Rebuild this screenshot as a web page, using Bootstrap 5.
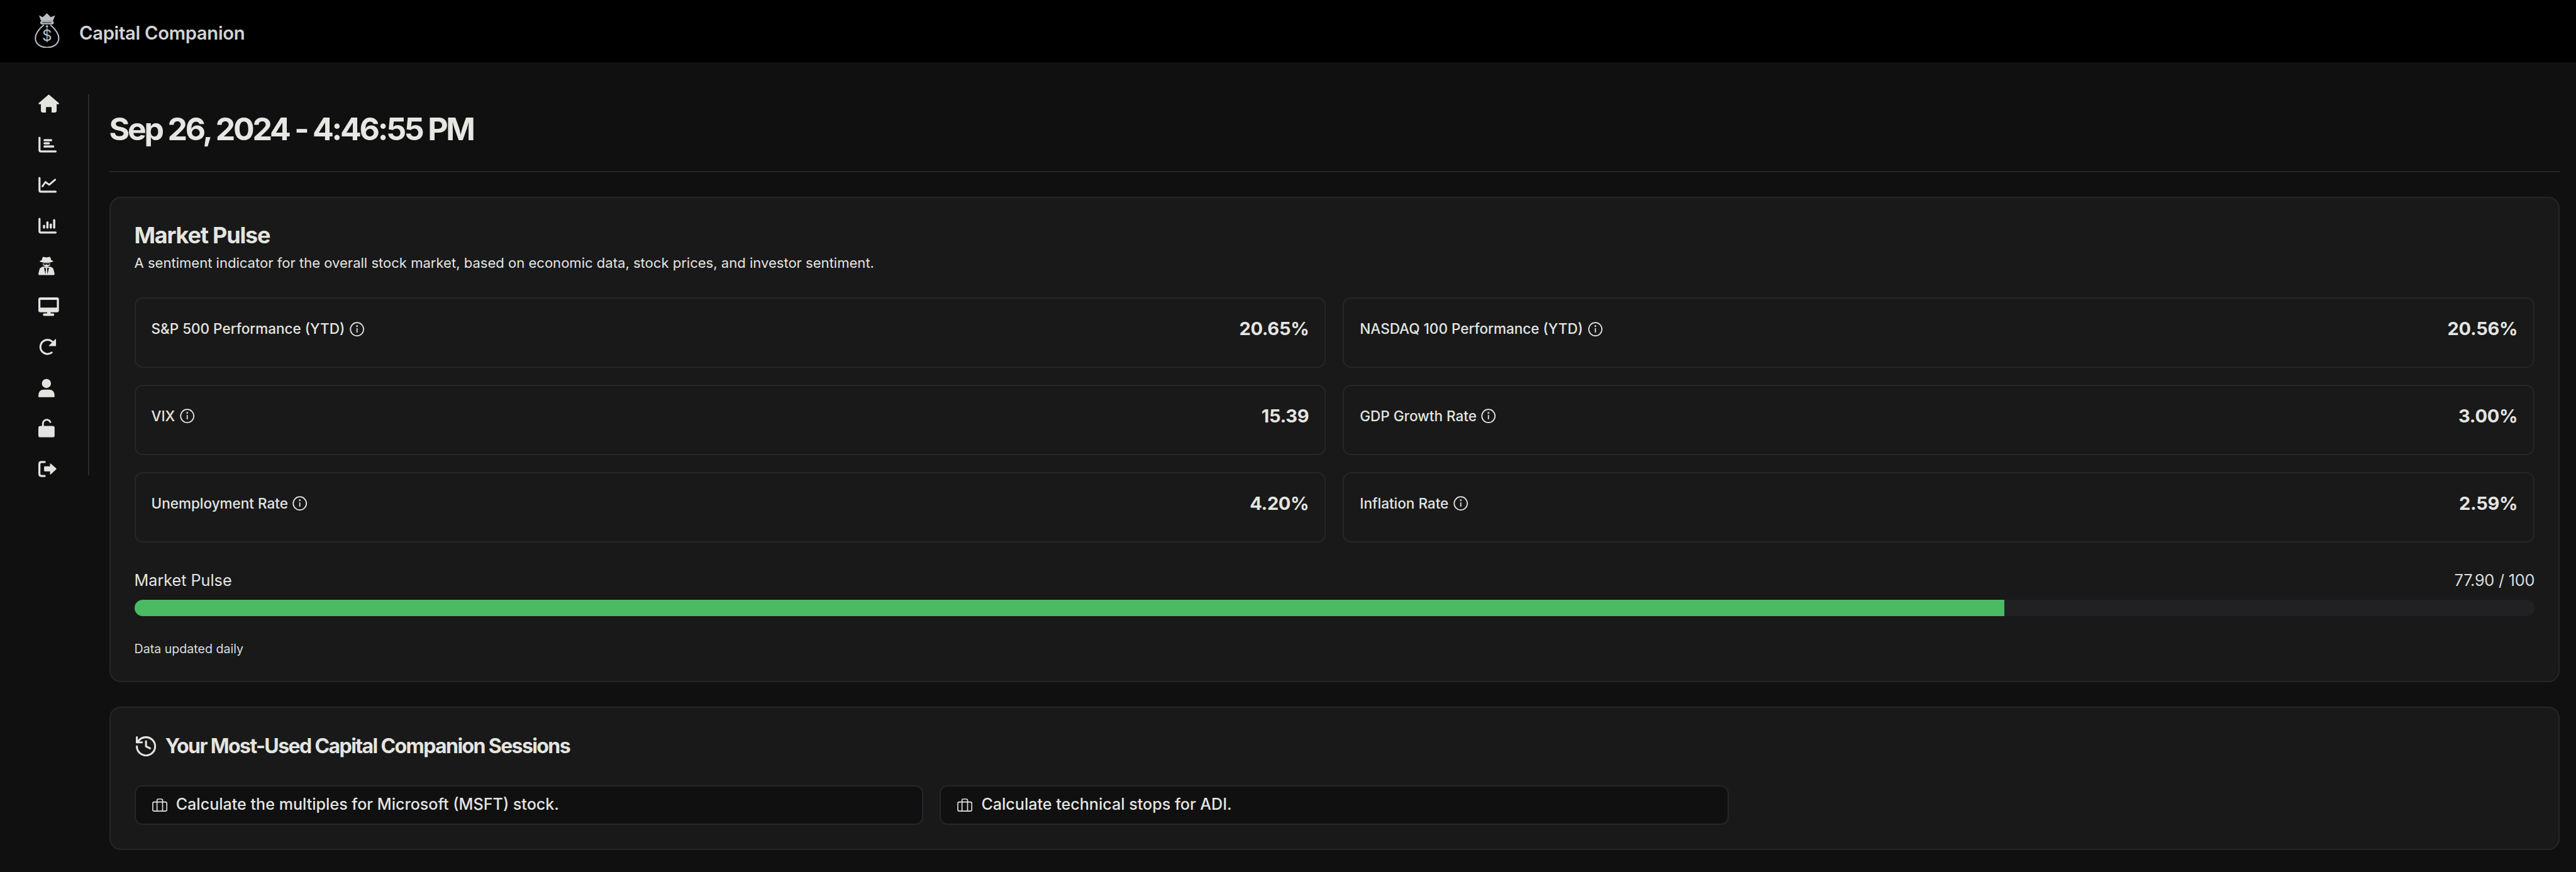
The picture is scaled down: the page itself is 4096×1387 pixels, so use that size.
<!DOCTYPE html>
<html lang="en">
<head>
    <meta charset="UTF-8">
    <meta name="viewport" content="width=device-width, initial-scale=1.0">
    <title>Capital Companion</title>
    <link rel="stylesheet" href="https://cdn.jsdelivr.net/npm/bootstrap@5.3.0/dist/css/bootstrap.min.css">
    <style>
        html, body { height: 100%; }
        body { background: #101011; color: #e4e5e0; font-family: Inter, "Liberation Sans", sans-serif; overflow: hidden; }
        .top-bar { background: #000; height: 98.5px; padding: 0 0 0 55px; justify-content: flex-start; flex-wrap: nowrap; gap: 31px; }
        .logo-mark { width: 40px; height: 55.5px; margin-top: -2px; }
        .brand-name { color: #d2d3d2; font-size: 29.2px; font-weight: 600; letter-spacing: -0.01em; line-height: 1; margin-top: 7px; }
        .side-col { width: 173.5px; flex: none; padding-top: 51.5px; }
        .side-inner { width: 141.5px; height: 606px; border-right: 2px solid #2a2a2e; padding-left: 61px; gap: 32.28px; }
        .side-inner svg { width: 33.1px; height: 32.28px; display: block; flex: none; fill: #e3e4e0; }
        .main-col { flex: 1; min-width: 0; padding: 76.9px 26.4px 0 0; }
        .page-date { font-size: 50px; line-height: 60px; font-weight: 700; letter-spacing: -0.065em; margin: 0; color: #e6e7e3; }
        .page-rule { border-top: 2px solid #25252a; margin: 37px 0 39px; opacity: 1; }
        .panel-card { background: #19191a; border: 2px solid #26262a; border-radius: 18px; color: inherit; }
        .panel-one { padding: 36.5px 37.5px 40.5px 38px; margin-bottom: 39px; }
        .panel-two { padding: 41.4px 38px 38.5px; }
        .panel-title { font-size: 36px; line-height: 44px; font-weight: 700; letter-spacing: -0.033em; margin: 0 0 8.5px; }
        .panel-sub { font-size: 22.05px; line-height: 28px; margin: 0 0 41px; }
        .metric-grid { --bs-gutter-x: 27px; --bs-gutter-y: 26.7px; }
        .metric-box { border: 2px solid #26262a; border-radius: 13px; height: 112px; padding: 27px 25px 39px; }
        .metric-label { font-size: 22.5px; line-height: 42px; font-weight: 500; gap: 7.5px; }
        .metric-label svg { width: 23.4px; height: 23.4px; }
        .metric-value { font-size: 29px; line-height: 42px; font-weight: 700; letter-spacing: -0.01em; }
        .pulse-row { margin-top: 45.8px; margin-bottom: 17.5px; font-size: 25.2px; line-height: 28px; }
        .pulse-score { font-size: 25.3px; color: #dcddd9; letter-spacing: -0.01em; }
        .pulse-track { --bs-progress-height: 25.8px; --bs-progress-bg: #212124; --bs-progress-border-radius: 13px; --bs-progress-bar-bg: #4cba63; }
        .pulse-note { font-size: 19.6px; line-height: 20px; margin: 42.3px 0 0; color: #dcddd9; }
        .sessions-head { font-size: 32px; line-height: 40px; font-weight: 700; letter-spacing: -0.05em; margin: 0 0 41.7px; gap: 15px; }
        .sessions-head svg { width: 32.3px; height: 32.3px; margin-left: 2px; }
        .sessions-grid { --bs-gutter-x: 26px; }
        .session-btn { --bs-btn-color: #e4e5e0; --bs-btn-bg: #101011; --bs-btn-border-color: #26262a; --bs-btn-hover-color: #e4e5e0; --bs-btn-hover-bg: #101011; --bs-btn-hover-border-color: #26262a; --bs-btn-border-width: 2px; --bs-btn-border-radius: 13px; --bs-btn-padding-x: 26px; --bs-btn-padding-y: 0; --bs-btn-font-size: 25.1px; --bs-btn-font-weight: 500; height: 63px; gap: 14px; }
        .session-btn svg { width: 24.2px; height: 21px; flex: none; }
    </style>
</head>
<body>
    <nav class="navbar top-bar">
        <svg class="logo-mark" viewBox="0 0 49.4 68.7">
            <path fill="#bcbec6" d="M8.7 4.3 16 7.7 24.3 0 31.7 7.7 40.3 4.3 36 15.5H12.7Z"/>
            <rect x="11" y="15.5" width="26.7" height="6.5" rx="3" fill="#bcbec6"/>
            <path d="M15 18.5H33" stroke="#000" stroke-width="1.2"/>
            <path fill="none" stroke="#bcbec6" stroke-width="2.6" d="M18 23C9 31 1.5 39 1.5 49 1.5 61 12 67.4 24.5 67.4S47.5 61 47.5 49C47.5 39 40 31 31 23"/>
            <path fill="#bcbec6" d="M24.4 23 27 26 24.4 29 21.8 26Z"/>
            <text x="24.5" y="55" text-anchor="middle" font-family="Inter, sans-serif" font-size="30" font-weight="400" fill="#bcbec6">$</text>
        </svg>
        <span class="brand-name">Capital Companion</span>
    </nav>
    <div class="d-flex">
        <div class="side-col">
            <div class="side-inner d-flex flex-column">
                <svg viewBox="0 0 41 40"><path d="M20.5.3 40.5 17.5Q41.5 19.5 39 19.5H36V33Q36 36 33 36H26V26Q26 25 25 25H16Q15 25 15 26V36H8Q5 36 5 33V19.5H2Q-.5 19.5.5 17.5Z"/></svg>
                <svg viewBox="0 0 41 40"><path fill="none" stroke="#e3e4e0" stroke-width="4" stroke-linecap="round" d="M2.2 5V29Q2.2 32 5 32H34"/><rect x="10" y="7.7" width="17.3" height="4.3" rx="2.1"/><rect x="10" y="13.9" width="12.7" height="4.3" rx="2.1"/><rect x="10" y="20.3" width="21.3" height="4.3" rx="2.1"/></svg>
                <svg viewBox="0 0 41 40"><path fill="none" stroke="#e3e4e0" stroke-width="4" stroke-linecap="round" d="M2.2 5V29Q2.2 32 5 32H34"/><path fill="none" stroke="#e3e4e0" stroke-width="3.6" stroke-linecap="round" stroke-linejoin="round" d="M8 21.5 14 13 21.3 18.5 33 8.5"/></svg>
                <svg viewBox="0 0 41 40"><path fill="none" stroke="#e3e4e0" stroke-width="4" stroke-linecap="round" d="M2.2 5V29Q2.2 32 5 32H34"/><rect x="9" y="16.7" width="4.3" height="7.7" rx="2.1"/><rect x="15.7" y="10" width="4.3" height="14.4" rx="2.1"/><rect x="22.3" y="14.3" width="4.3" height="10.1" rx="2.1"/><rect x="29" y="5.7" width="4.3" height="18.7" rx="2.1"/></svg>
                <svg viewBox="0 0 41 40"><path d="M8 2.5Q9 .5 11 .8L16 2 21 .8Q23 .5 24 2.5L25.5 7.5Q28 8 29.7 9.5 25 12 16 12 7 12 2.3 9.5 4 8 6.5 7.5Z"/><path d="M9 13H23V17Q20 20 16 20 12 20 9 17Z"/><path fill="#101011" d="M10 13.5H22V15Q22 16.5 20 16.5H18Q16.5 16.5 16 15 15.5 16.5 14 16.5H12Q10 16.5 10 15Z"/><path d="M8 20Q3 22 2 26L0 34Q0 36.7 2 36.7H30Q32 36.7 32 34L30 26Q29 22 24 20Z"/><path fill="#101011" d="M11 22 15 23 14 35ZM21 22 17 23 18 35Z"/></svg>
                <svg viewBox="0 0 41 40"><path fill-rule="evenodd" d="M4 0H36.5Q40.5 0 40.5 4V25.3Q40.5 29.3 36.5 29.3H24V31.7H29Q31.3 31.7 31.3 34.2T29 36.7H11.5Q9 36.7 9 34.2T11.5 31.7H17.3V29.3H4Q0 29.3 0 25.3V4Q0 0 4 0ZM4 5V20H36.4V5Z"/></svg>
                <svg viewBox="0 0 41 40"><path fill="none" stroke="#e3e4e0" stroke-width="3.6" stroke-linecap="round" d="M27.9 8.4A14 14 0 1 0 26.5 29.4"/><path stroke="#e3e4e0" stroke-width="1.5" stroke-linejoin="round" d="M34 3.5V16H21.5Z"/></svg>
                <svg viewBox="0 0 41 40"><circle cx="15.9" cy="9.8" r="9"/><path d="M0 34Q0 22 11 22H21Q32 22 32 34V35Q32 37 30 37H2Q0 37 0 35Z"/></svg>
                <svg viewBox="0 0 41 40"><rect x="0" y="14.3" width="32" height="22.4" rx="4"/><path fill="none" stroke="#e3e4e0" stroke-width="3.6" stroke-linecap="round" d="M9 15V10A7.6 7.6 0 0 1 23.5 6.5"/></svg>
                <svg viewBox="0 0 41 40"><path fill="none" stroke="#e3e4e0" stroke-width="4" stroke-linecap="round" d="M12.5 4.7H6Q2 4.7 2 8.7V28.3Q2 32.3 6 32.3H12.5"/><path d="M12.5 13.3H23V8.5Q23 7 24.5 8L35.2 17.5Q36 18.3 35.2 19.1L24.5 29Q23 30 23 28.5V23.3H12.5Q11.3 23.3 11.3 22V14.6Q11.3 13.3 12.5 13.3Z"/></svg>
            </div>
        </div>
        <main class="main-col">
            <h1 class="page-date">Sep 26, 2024 - 4:46:55 PM</h1>
            <hr class="page-rule">

            <section class="card panel-card panel-one">
                <h2 class="panel-title">Market Pulse</h2>
                <p class="panel-sub">A sentiment indicator for the overall stock market, based on economic data, stock prices, and investor sentiment.</p>
                <div class="row metric-grid" id="metrics"></div>
                <div class="pulse-row d-flex justify-content-between">
                    <span>Market Pulse</span>
                    <span class="pulse-score">77.90 / 100</span>
                </div>
                <div class="progress pulse-track">
                    <div class="progress-bar" style="width: 77.9%"></div>
                </div>
                <p class="pulse-note">Data updated daily</p>
            </section>

            <section class="card panel-card panel-two">
                <h3 class="sessions-head d-flex align-items-center">
                    <svg viewBox="2 2 20 20" fill="none" stroke="#e4e5e0" stroke-width="1.9" stroke-linecap="round" stroke-linejoin="round"><path d="M3 12a9 9 0 1 0 9-9 9.75 9.75 0 0 0-6.74 2.74L3 8"/><path d="M3 3v5h5"/><path d="M12 7v5l4 2"/></svg>
                    <span>Your Most-Used Capital Companion Sessions</span>
                </h3>
                <div class="row sessions-grid">
                    <div class="col-4"><button class="btn session-btn w-100 d-flex align-items-center text-start">
                        <svg viewBox="0 0 30 26" fill="none" stroke="#e4e5e0" stroke-width="2"><rect x="1.2" y="7" width="27.6" height="18" rx="3"/><path d="M9.5 25V3.5Q9.5 1.2 11.8 1.2H18.2Q20.5 1.2 20.5 3.5V25"/></svg>
                        <span>Calculate the multiples for Microsoft (MSFT) stock.</span></button></div>
                    <div class="col-4"><button class="btn session-btn w-100 d-flex align-items-center text-start">
                        <svg viewBox="0 0 30 26" fill="none" stroke="#e4e5e0" stroke-width="2"><rect x="1.2" y="7" width="27.6" height="18" rx="3"/><path d="M9.5 25V3.5Q9.5 1.2 11.8 1.2H18.2Q20.5 1.2 20.5 3.5V25"/></svg>
                        <span>Calculate technical stops for ADI.</span></button></div>
                </div>
            </section>
        </main>
    </div>
    <script src="https://cdn.jsdelivr.net/npm/bootstrap@5.3.0/dist/js/bootstrap.bundle.min.js"></script>
    <script>
        const metrics = [
            ["S&P 500 Performance (YTD)", "20.65%"],
            ["NASDAQ 100 Performance (YTD)", "20.56%"],
            ["VIX", "15.39"],
            ["GDP Growth Rate", "3.00%"],
            ["Unemployment Rate", "4.20%"],
            ["Inflation Rate", "2.59%"]
        ];
        const infoIcon = `<svg viewBox="0 0 29 29" fill="none" stroke="#e4e5e0" stroke-width="2.2"><circle cx="14.5" cy="14.5" r="13"/><path d="M14.5 12.5V21"/><circle cx="14.5" cy="8.3" r=".7"/></svg>`;
        let html = "";
        metrics.forEach(m => {
            html += `<div class="col-6"><div class="metric-box d-flex justify-content-between">
                <span class="metric-label d-flex align-items-center">${m[0].replace("&", "&amp;")} ${infoIcon}</span>
                <span class="metric-value">${m[1]}</span>
            </div></div>`;
        });
        document.getElementById("metrics").innerHTML = html;
    </script>
</body>
</html>
